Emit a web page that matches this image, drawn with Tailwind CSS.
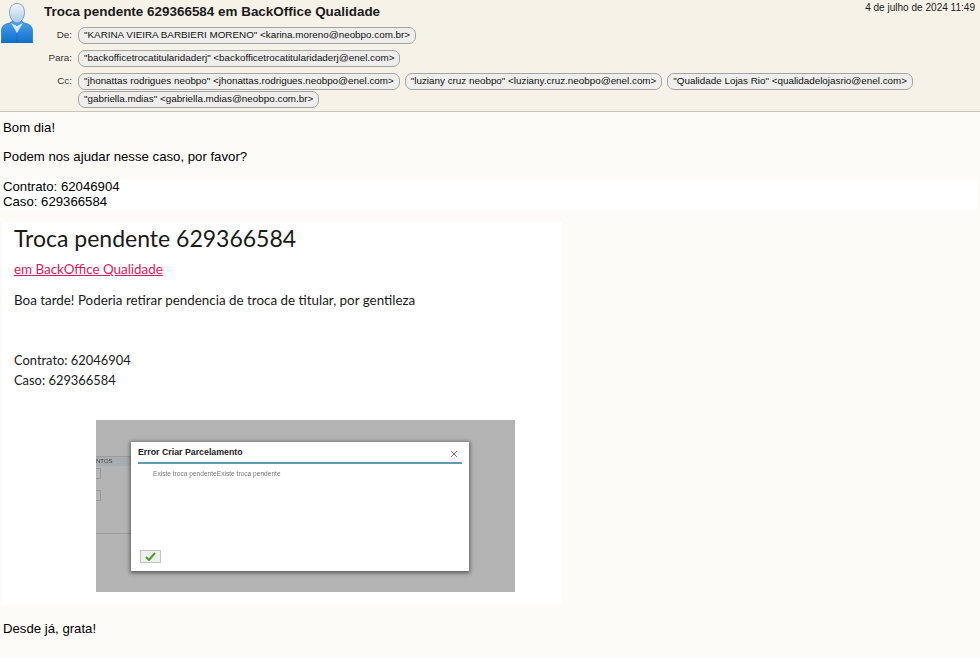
<!DOCTYPE html>
<html lang="en">
<head>
  <meta charset="UTF-8" />
  <title>Troca pendente</title>
  <script src="https://cdn.jsdelivr.net/npm/@tailwindcss/browser@4"></script>
</head>
<body class="bg-[#fdfbf8] text-black font-['Liberation_Sans',sans-serif] overflow-hidden h-[658px]">

  <!-- header -->
  <div class="h-[112px] bg-[#f6f2e8] border-b border-[#c8c5bc] flex pl-[1px] relative">
    <svg class="w-[32px] h-[43px] shrink-0" viewBox="0 0 32 43">
      <defs>
        <linearGradient id="shirt" x1="0" y1="0" x2="0" y2="1"><stop offset="0" stop-color="#4aa3ee"/><stop offset="1" stop-color="#0f6fc8"/></linearGradient>
        <linearGradient id="head" x1="0" y1="0" x2="0" y2="1"><stop offset="0" stop-color="#f4f8fc"/><stop offset="1" stop-color="#a9c8e8"/></linearGradient>
      </defs>
      <path d="M0.5 31c0-5 3-7 8-8l3-2h9l3 2c5 1 8 3 8 8v12H.5z" fill="url(#shirt)" stroke="#1565b0" stroke-width=".6"/>
      <path d="M10 23l6 10 6-10-6 3z" fill="#d5e8f8"/>
      <path d="M16 33v10" stroke="#1565b0" stroke-width=".5"/>
      <path d="M16 3.5c5 0 7.500 4 7.500 9 0 5-3.500 10.500-7.500 10.500s-7.500-5.500-7.500-10.500c0-5 2.500-9 7.500-9z" fill="url(#head)" stroke="#5f8fc0" stroke-width=".8"/>
    </svg>

    <div class="ml-[11px] flex-1 min-w-0">
      <h1 class="text-[13.45px] leading-[16px] font-bold text-[#1b1b1b] mt-[4px]">Troca pendente 629366584 em BackOffice Qualidade</h1>
      <div class="text-[9.85px] leading-[14px] text-[#111] mt-[7px]">
        <div class="flex items-start">
          <span class="w-[28px] text-right text-[#333] mt-[1px] shrink-0">De:</span>
          <div class="ml-[6px] flex gap-[5px]">
            <span class="h-[17px] px-[5px] leading-[14px] rounded-[7px] border border-[#a4a4a4] bg-[#eeeeec] whitespace-nowrap">"KARINA VIEIRA BARBIERI MORENO" &lt;karina.moreno@neobpo.com.br&gt;</span>
          </div>
        </div>
        <div class="flex items-start mt-[6px]">
          <span class="w-[28px] text-right text-[#333] mt-[1px] shrink-0">Para:</span>
          <div class="ml-[6px] flex gap-[5px]">
            <span class="h-[17px] px-[5px] leading-[14px] rounded-[7px] border border-[#a4a4a4] bg-[#eeeeec] whitespace-nowrap">"backofficetrocatitularidaderj" &lt;backofficetrocatitularidaderj@enel.com&gt;</span>
          </div>
        </div>
        <div class="flex items-start mt-[6px]">
          <span class="w-[28px] text-right text-[#333] mt-[1px] shrink-0">Cc:</span>
          <div class="ml-[6px] flex flex-wrap gap-x-[5px] gap-y-[1px] w-[860px]">
            <span class="h-[17px] px-[5px] leading-[14px] rounded-[7px] border border-[#a4a4a4] bg-[#eeeeec] whitespace-nowrap">"jhonattas rodrigues neobpo" &lt;jhonattas.rodrigues.neobpo@enel.com&gt;</span>
            <span class="h-[17px] px-[5px] leading-[14px] rounded-[7px] border border-[#a4a4a4] bg-[#eeeeec] whitespace-nowrap">"luziany cruz neobpo" &lt;luziany.cruz.neobpo@enel.com&gt;</span>
            <span class="h-[17px] px-[5px] leading-[14px] rounded-[7px] border border-[#a4a4a4] bg-[#eeeeec] whitespace-nowrap">"Qualidade Lojas Rio" &lt;qualidadelojasrio@enel.com&gt;</span>
            <span class="h-[17px] px-[5px] leading-[14px] rounded-[7px] border border-[#a4a4a4] bg-[#eeeeec] whitespace-nowrap">"gabriella.mdias" &lt;gabriella.mdias@neobpo.com.br&gt;</span>
          </div>
        </div>
      </div>
    </div>
    <span class="absolute right-[5px] top-[1px] text-[10.05px] leading-[14px] text-[#222]">4 de julho de 2024 11:49</span>
  </div>

  <!-- message -->
  <div class="text-[13.2px] leading-[15px] pl-[3px]">
    <p class="pt-[8px]">Bom dia!</p>
    <p class="pt-[14px]">Podem nos ajudar nesse caso, por favor?</p>
  </div>
  <div class="mt-[15px] w-[977px] h-[31px] bg-white pl-[3px] text-[13.2px] leading-[15px]">
    <p>Contrato: 62046904</p>
    <p>Caso: 629366584</p>
  </div>

  <!-- forwarded card -->
  <div class="ml-[2px] mt-[12px] w-[560px] h-[383px] bg-white pl-[12px] font-['Lato',sans-serif] text-[13.4px] text-[#1a1a1a]">
    <h2 class="text-[23px] leading-[30px] pt-[1px] h-[31px]">Troca pendente 629366584</h2>
    <a class="block mt-[7px] leading-[18px] text-[#e0195c] underline">em BackOffice Qualidade</a>
    <p class="mt-[13px] leading-[18px]">Boa tarde! Poderia retirar pendencia de troca de titular, por gentileza</p>
    <p class="mt-[41px] leading-[20px] text-[12.9px]">Contrato: 62046904</p>
    <p class="leading-[20px] text-[12.9px]">Caso: 629366584</p>

    <!-- embedded screenshot -->
    <div class="relative ml-[82px] mt-[30px] w-[419px] h-[172px] bg-[#b4b4b4] overflow-hidden font-['Liberation_Sans',sans-serif]">
      <div class="absolute left-0 top-[36px] w-[36px] h-[10px] bg-[#a9adaf] border-t border-[#9c9c9c] text-[6px] leading-[9px] text-[#444] blur-[0.3px]">NTOS</div>
      <div class="absolute left-0 top-[48px] w-[5px] h-[11px] border border-l-0 border-[#9c9c9c]"></div>
      <div class="absolute left-0 top-[70px] w-[5px] h-[11px] border border-l-0 border-[#9c9c9c]"></div>
      <div class="absolute left-0 top-[113px] w-[36px] h-px bg-[#9c9c9c]"></div>

      <div class="absolute left-[35px] top-[22px] w-[338px] h-[129px] bg-white shadow-[0_1px_4px_1px_rgba(0,0,0,0.5)] px-[7px]">
        <div class="h-[22px] pt-[2px] border-b-2 border-[#5f9bb3] flex items-center justify-between pr-[4px]">
          <span class="text-[8.8px] font-bold text-[#222]">Error Criar Parcelamento</span>
          <svg class="w-[8px] h-[8px] mt-[2px]" viewBox="0 0 8 8"><path d="M1 1l6 6M7 1l-6 6" stroke="#777" stroke-width="1"/></svg>
        </div>
        <p class="ml-[15px] mt-[5px] text-[6.6px] leading-[9px] text-[#777] blur-[0.3px]">Existe troca pendenteExiste troca pendente</p>
        <div class="ml-[2px] mt-[72px] w-[21px] h-[13px] bg-[#eef0ea] border border-[#c4c4c4] flex items-center justify-center">
          <svg class="w-[11px] h-[9px]" viewBox="0 0 11 9"><path d="M1 5l3 3 6-7" fill="none" stroke="#4f9a3c" stroke-width="2"/></svg>
        </div>
      </div>
    </div>
  </div>

  <p class="pl-[3px] mt-[16px] text-[13.2px] leading-[16px]">Desde já, grata!</p>

</body>
</html>
